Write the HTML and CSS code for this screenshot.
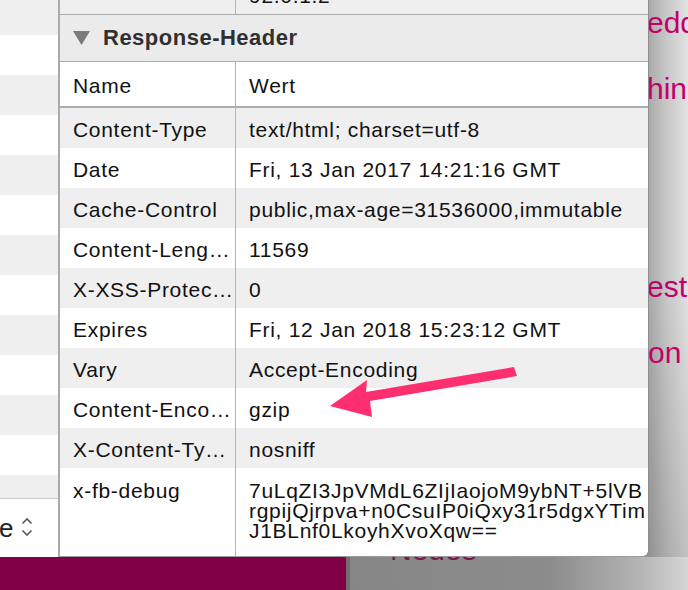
FILE: index.html
```html
<!DOCTYPE html>
<html lang="de">
<head>
<meta charset="utf-8">
<title>Response-Header</title>
<link rel="stylesheet" href="styles.css">
</head>
<body>
<div class="scene">
  <div class="backdrop">
    <div class="top-area">
      <aside class="side">
        <div class="side-rows">
          <div class="srow odd"></div>
          <div class="srow"></div>
          <div class="srow odd"></div>
          <div class="srow"></div>
          <div class="srow odd"></div>
          <div class="srow"></div>
          <div class="srow odd"></div>
          <div class="srow"></div>
          <div class="srow odd"></div>
          <div class="srow"></div>
          <div class="srow odd"></div>
          <div class="srow"></div>
          <div class="srow odd"></div>
        </div>
        <div class="side-foot">
          <span class="select-text">e</span>
          <svg class="stepper" width="12" height="21" viewBox="0 0 12 21" aria-hidden="true">
            <polyline points="1.5,6.5 6,2 10.5,6.5" fill="none" stroke="#5a5a5a" stroke-width="1.6"/>
            <polyline points="1.5,13.5 6,18 10.5,13.5" fill="none" stroke="#5a5a5a" stroke-width="1.6"/>
          </svg>
        </div>
      </aside>
      <main class="page">
        <div class="page-text">
          <p class="pline">eddings</p>
          <p class="pline">hings</p>
          <p class="pline">&nbsp;</p>
          <p class="pline">&nbsp;</p>
          <p class="pline">est</p>
          <p class="pline shifted">on</p>
        </div>
      </main>
    </div>
    <div class="bottom-strip">
      <div class="footbar"></div>
      <div class="footrest"><span class="neue">Neues</span></div>
    </div>
  </div>

  <section class="inspector">
    <div class="row cut odd">
      <div class="cell name"></div>
      <div class="cell value">92.0.1.2</div>
    </div>
    <div class="section-head">
      <svg class="disclosure" width="17" height="14" viewBox="0 0 17 14" aria-hidden="true">
        <polygon points="0,0 17,0 8.5,14" fill="#7b7b7b"/>
      </svg>
      <span class="section-title">Response-Header</span>
    </div>
    <div class="row head">
      <div class="cell name">Name</div>
      <div class="cell value">Wert</div>
    </div>
    <div class="row odd">
      <div class="cell name">Content-Type</div>
      <div class="cell value">text/html; charset=utf-8</div>
    </div>
    <div class="row">
      <div class="cell name">Date</div>
      <div class="cell value">Fri, 13 Jan 2017 14:21:16 GMT</div>
    </div>
    <div class="row odd">
      <div class="cell name">Cache-Control</div>
      <div class="cell value">public,max-age=31536000,immutable</div>
    </div>
    <div class="row">
      <div class="cell name" title="Content-Length">Content-Leng…</div>
      <div class="cell value">11569</div>
    </div>
    <div class="row odd">
      <div class="cell name" title="X-XSS-Protection">X-XSS-Protec…</div>
      <div class="cell value">0</div>
    </div>
    <div class="row">
      <div class="cell name">Expires</div>
      <div class="cell value">Fri, 12 Jan 2018 15:23:12 GMT</div>
    </div>
    <div class="row odd">
      <div class="cell name">Vary</div>
      <div class="cell value">Accept-Encoding</div>
    </div>
    <div class="row">
      <div class="cell name" title="Content-Encoding">Content-Enco…</div>
      <div class="cell value">gzip</div>
    </div>
    <div class="row odd">
      <div class="cell name" title="X-Content-Type-Options">X-Content-Ty…</div>
      <div class="cell value">nosniff</div>
    </div>
    <div class="row last">
      <div class="cell name">x-fb-debug</div>
      <div class="cell value">7uLqZI3JpVMdL6ZIjIaojoM9ybNT+5lVB<br>rgpijQjrpva+n0CsuIP0iQxy31r5dgxYTim<br>J1BLnf0LkoyhXvoXqw==</div>
    </div>
  </section>

  <svg class="arrow" width="688" height="590" viewBox="0 0 688 590" aria-hidden="true">
    <polygon points="514,367 517,376 370,401 372,417 330,406 367,380 366,392" fill="#fd2f6e"/>
  </svg>
</div>
</body>
</html>
```
FILE: styles.css
```css
* { box-sizing: border-box; }

html, body {
  margin: 0;
  padding: 0;
}

body {
  width: 688px;
  height: 590px;
  overflow: hidden;
  font-family: "Liberation Sans", Arial, sans-serif;
}

.scene {
  position: relative;
  width: 688px;
  height: 590px;
  overflow: hidden;
  background: #e9e9e9;
}

/* ---------- background window ---------- */
.backdrop {
  display: flex;
  flex-direction: column;
  height: 590px;
}

.top-area {
  display: flex;
  height: 557px;
}

.side {
  width: 58px;
  flex: none;
  display: flex;
  flex-direction: column;
  background: #fff;
  overflow: hidden;
}

.side-rows {
  flex: 1;
  overflow: hidden;
}

.srow {
  height: 40px;
  background: #fff;
}

.srow.odd {
  background: #efefef;
}

.srow:first-child {
  margin-top: -5px;
}

.side-foot {
  height: 59px;
  flex: none;
  border-top: 1px solid #c9c9c9;
  background: #fff;
  display: flex;
  align-items: center;
  gap: 8px;
}

.select-text {
  font-size: 26px;
  color: #222;
  margin-left: -1px;
  line-height: 30px;
}

.stepper {
  display: block;
  margin-top: -1px;
}

/* page behind the popover, shaded by the popover's drop shadow */
.page {
  flex: 1;
  padding-left: 589px;
  overflow: hidden;
  background:
    linear-gradient(to bottom, rgba(0, 0, 0, 0) 50%, rgba(0, 0, 0, 0.14) 100%),
    linear-gradient(to right, rgba(0, 0, 0, 0.27) 591px, rgba(0, 0, 0, 0.14) 609px, rgba(0, 0, 0, 0.03) 630px);
}

.page-text {
  margin-top: -10px;
}

.pline {
  margin: 0;
  font-size: 30px;
  line-height: 66px;
  color: #c2006b;
  white-space: nowrap;
}

.pline.shifted {
  padding-left: 1px;
}

.bottom-strip {
  height: 33px;
  display: flex;
}

.footbar {
  width: 350px;
  flex: none;
  background: #7e0045;
  border-right: 4px solid #6f6f6f;
}

.footrest {
  flex: 1;
  background: linear-gradient(to right, #868686 0, #8c8c8c 200px, #b4b4b4 290px, #d6d6d6 338px);
}

.neue {
  display: block;
  margin-top: -24px;
  padding-left: 40px;
  font-size: 30px;
  line-height: 33px;
  color: #7a1650;
}

/* ---------- inspector popover ---------- */
.inspector {
  position: absolute;
  z-index: 1;
  left: 58px;
  top: 0;
  width: 591px;
  height: 557px;
  background: #fff;
  border-left: 2px solid #aaaaaa;
  border-right: 1px solid #8d8d8d;
  border-bottom: 1px solid #9a9a9a;
  border-bottom-right-radius: 7px;
  overflow: hidden;
  font-size: 21px;
  letter-spacing: 0.7px;
  color: #111;
}

.row {
  display: grid;
  grid-template-columns: 176px 1fr;
  background: #fff;
}

.row.odd {
  background: #efefef;
}

.cell {
  padding: 12px 14px 8px 13px;
  line-height: 20px;
  white-space: nowrap;
}

.cell.name {
  padding-right: 2px;
  border-right: 1px solid #b4b4b4;
  overflow: hidden;
}

.row.cut {
  margin-top: -26px;
  border-bottom: 1px solid #ababab;
}

.row.cut .cell {
  height: 40px;
}

.row.head {
  border-top: 1px solid #ababab;
  border-bottom: 2px solid #ababab;
}

.row.head .cell {
  height: 44px;
  padding-top: 14px;
  padding-bottom: 10px;
}

.row.last .cell {
  height: 88px;
  padding-top: 13px;
}

.section-head {
  height: 46px;
  display: flex;
  align-items: center;
  padding-left: 13px;
  gap: 13px;
  background: #ebebeb;
}

.disclosure {
  display: block;
  flex: none;
}

.section-title {
  font-weight: bold;
  font-size: 22px;
  letter-spacing: 0.5px;
  color: #303030;
}

.arrow {
  position: absolute;
  left: 0;
  top: 0;
  z-index: 3;
  pointer-events: none;
}
```
